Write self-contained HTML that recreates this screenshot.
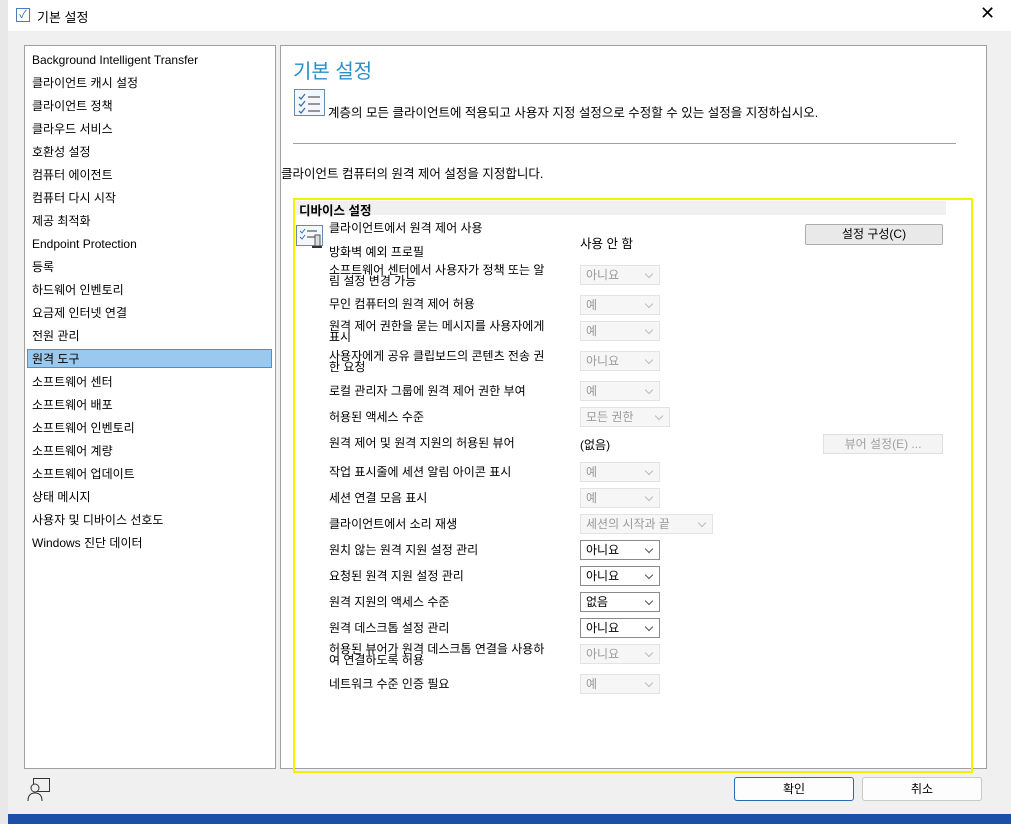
<!DOCTYPE html><html><head><meta charset="utf-8"><style>
*{margin:0;padding:0;box-sizing:border-box}
body{width:1011px;height:824px;overflow:hidden;position:relative;background:#1b4fa8;font-family:"Liberation Sans","Noto Sans CJK KR",sans-serif;font-size:12px;color:#000}
.a{position:absolute;white-space:nowrap}
.dlg{position:absolute;left:8px;top:0;width:1003px;height:814px;background:#f0f0f0}
.tb{position:absolute;left:8px;top:0;width:1003px;height:31px;background:#fff}
.panel{position:absolute;background:#fff;border:1px solid #a0a0a0}
.li{position:absolute;left:32px;font-size:12px;line-height:16px;height:16px}
.dd{position:absolute;left:580px;width:80px;height:20px;border:1px solid #e3e3e3;background:#f6f6f6;color:#9a9a9a;padding-left:5px;line-height:18px;font-size:12px}
.dd:after{content:"";position:absolute;right:7px;top:5px;width:5px;height:5px;border-right:1px solid #bbb;border-bottom:1px solid #bbb;transform:rotate(45deg)}
.dd.en{border-color:#8a8a8a;background:#fff;color:#000}
.dd.en:after{border-color:#555}
.lb{position:absolute;left:329px;font-size:12px;line-height:11px}
.btn{position:absolute;height:24px;border:1px solid #c8c8c8;background:#fdfdfd;text-align:center;line-height:22px;border-radius:3px}
</style></head><body>
<div class="a" style="left:0;top:0;width:8px;height:824px;background:#e8e8e8"></div>
<div class="dlg"></div>
<div class="tb"></div>
<div class="a" style="left:16px;top:8px;width:14px;height:14px;border:1px solid #4a7cc0;background:#fff;color:#2a6bc0;font-size:11px;line-height:12px;text-align:center">✓</div>
<div class="a" style="left:37px;top:7px;font-size:13px">기본 설정</div>
<div class="a" style="left:980px;top:3px;font-size:18px">✕</div>
<div class="panel" style="left:24px;top:45px;width:252px;height:724px"></div>
<div class="a" style="left:27px;top:349px;width:245px;height:19px;background:#99c9ef;border:1px solid #4a90d0"></div>
<div class="li" style="top:52px">Background Intelligent Transfer</div>
<div class="li" style="top:75px">클라이언트 캐시 설정</div>
<div class="li" style="top:98px">클라이언트 정책</div>
<div class="li" style="top:121px">클라우드 서비스</div>
<div class="li" style="top:144px">호환성 설정</div>
<div class="li" style="top:167px">컴퓨터 에이전트</div>
<div class="li" style="top:190px">컴퓨터 다시 시작</div>
<div class="li" style="top:213px">제공 최적화</div>
<div class="li" style="top:236px">Endpoint Protection</div>
<div class="li" style="top:259px">등록</div>
<div class="li" style="top:282px">하드웨어 인벤토리</div>
<div class="li" style="top:305px">요금제 인터넷 연결</div>
<div class="li" style="top:328px">전원 관리</div>
<div class="li" style="top:351px">원격 도구</div>
<div class="li" style="top:374px">소프트웨어 센터</div>
<div class="li" style="top:397px">소프트웨어 배포</div>
<div class="li" style="top:420px">소프트웨어 인벤토리</div>
<div class="li" style="top:443px">소프트웨어 계량</div>
<div class="li" style="top:466px">소프트웨어 업데이트</div>
<div class="li" style="top:489px">상태 메시지</div>
<div class="li" style="top:512px">사용자 및 디바이스 선호도</div>
<div class="li" style="top:535px">Windows 진단 데이터</div>
<div class="panel" style="left:280px;top:45px;width:707px;height:724px"></div>
<div class="a" style="left:293px;top:55px;font-size:20px;color:#2b8fc8">기본 설정</div>
<svg class="a" style="left:294px;top:89px" width="31" height="27"><rect x="0.5" y="0.5" width="30" height="26" fill="#f4f8fc" stroke="#6b8aa8"/><path d="M5 8l2 2 4-5M5 15l2 2 4-5M5 22l2 2 4-5" stroke="#3a70b0" fill="none" stroke-width="1.3"/><path d="M14 8h12M14 15h12M14 22h12" stroke="#333"/></svg>
<div class="a" style="left:328px;top:102px;font-size:12.5px">계층의 모든 클라이언트에 적용되고 사용자 지정 설정으로 수정할 수 있는 설정을 지정하십시오.</div>
<div class="a" style="left:293px;top:143px;width:663px;height:1px;background:#a0a0a0"></div>
<div class="a" style="left:281px;top:163px;font-size:12.5px">클라이언트 컴퓨터의 원격 제어 설정을 지정합니다.</div>
<div class="a" style="left:293px;top:198px;width:680px;height:575px;border:2px solid #f5f000"></div>
<div class="a" style="left:296px;top:201px;width:650px;height:14px;background:#f0f0f0"></div>
<div class="a" style="left:299px;top:200px;font-weight:bold;font-size:12.5px">디바이스 설정</div>
<svg class="a" style="left:296px;top:223px" width="30" height="26"><rect x="0.5" y="2.5" width="26" height="20" fill="#f4f8fc" stroke="#6b8aa8"/><path d="M4 8l2 2 3-4M4 14l2 2 3-4" stroke="#3a70b0" fill="none"/><path d="M11 8h10M11 14h10" stroke="#333"/><rect x="19" y="12" width="5" height="11" fill="#ddd" stroke="#555"/><path d="M16 24h10" stroke="#333" stroke-width="2"/></svg>
<div class="lb" style="top:223px">클라이언트에서 원격 제어 사용</div>
<div class="lb" style="top:247px">방화벽 예외 프로필</div>
<div class="a" style="left:580px;top:233px;font-size:12.5px">사용 안 함</div>
<div class="btn" style="left:805px;top:224px;width:138px;height:21px;line-height:19px;border-color:#adadad;background:#e9e9e9;border-radius:2px">설정 구성(C)</div>
<div class="lb" style="top:265px">소프트웨어 센터에서 사용자가 정책 또는 알<br>림 설정 변경 가능</div><div class="dd" style="top:265px">아니요</div>
<div class="lb" style="top:299px">무인 컴퓨터의 원격 제어 허용</div><div class="dd" style="top:295px">예</div>
<div class="lb" style="top:321px">원격 제어 권한을 묻는 메시지를 사용자에게<br>표시</div><div class="dd" style="top:321px">예</div>
<div class="lb" style="top:351px">사용자에게 공유 클립보드의 콘텐츠 전송 권<br>한 요청</div><div class="dd" style="top:351px">아니요</div>
<div class="lb" style="top:386px">로컬 관리자 그룹에 원격 제어 권한 부여</div><div class="dd" style="top:381px">예</div>
<div class="lb" style="top:412px">허용된 액세스 수준</div><div class="dd" style="top:407px;width:90px">모든 권한</div>
<div class="lb" style="top:438px">원격 제어 및 원격 지원의 허용된 뷰어</div><div class="a" style="left:580px;top:436px">(없음)</div>
<div class="btn" style="left:823px;top:434px;width:120px;height:20px;line-height:18px;color:#a0a0a0;background:#f4f4f4;border-color:#e0e0e0;border-radius:0">뷰어 설정(E) ...</div>
<div class="lb" style="top:467px">작업 표시줄에 세션 알림 아이콘 표시</div><div class="dd" style="top:462px">예</div>
<div class="lb" style="top:493px">세션 연결 모음 표시</div><div class="dd" style="top:488px">예</div>
<div class="lb" style="top:519px">클라이언트에서 소리 재생</div><div class="dd" style="top:514px;width:133px">세션의 시작과 끝</div>
<div class="lb" style="top:545px">원치 않는 원격 지원 설정 관리</div><div class="dd en" style="top:540px">아니요</div>
<div class="lb" style="top:571px">요청된 원격 지원 설정 관리</div><div class="dd en" style="top:566px">아니요</div>
<div class="lb" style="top:597px">원격 지원의 액세스 수준</div><div class="dd en" style="top:592px">없음</div>
<div class="lb" style="top:623px">원격 데스크톱 설정 관리</div><div class="dd en" style="top:618px">아니요</div>
<div class="lb" style="top:644px">허용된 뷰어가 원격 데스크톱 연결을 사용하<br>여 연결하도록 허용</div><div class="dd" style="top:644px">아니요</div>
<div class="lb" style="top:679px">네트워크 수준 인증 필요</div><div class="dd" style="top:674px">예</div>
<svg class="a" style="left:25px;top:777px" width="28" height="26"><rect x="8.5" y="1.5" width="16" height="13" fill="none" stroke="#333"/><circle cx="10" cy="11" r="4" fill="#f0f0f0" stroke="#333"/><path d="M3 24q0-8 7-8q7 0 7 8" fill="#f0f0f0" stroke="#333"/></svg>
<div class="btn" style="left:734px;top:777px;width:120px;border-color:#2a6bb0">확인</div>
<div class="btn" style="left:862px;top:777px;width:120px">취소</div>
</body></html>
